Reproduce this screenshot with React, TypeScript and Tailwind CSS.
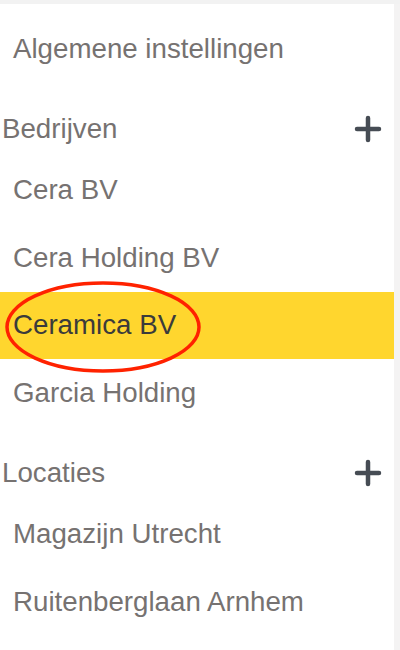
import React from 'react'

const font = { fontFamily: '"Liberation Sans", Arial, Helvetica, sans-serif' }

function Plus() {
  return (
    <svg className="w-[28px] h-[28px]" viewBox="0 0 28 28" fill="none">
      <path d="M14 3v22M3 14h22" stroke="#464c54" strokeWidth={4.5} strokeLinecap="round" />
    </svg>
  )
}

function Item({ label, active = false }: { label: string; active?: boolean }) {
  return (
    <div
      className={`relative h-[67.5px] flex items-center pl-[13px] text-[27.7px] ${
        active ? 'bg-[#ffd62e] text-[#3b3b3b]' : 'text-[#767271]'
      }`}
    >
      {label}
      {active && (
        <svg
          className="absolute left-[3px] top-[-12px] w-[200px] h-[94px] pointer-events-none"
          viewBox="0 0 200 94"
          fill="none"
        >
          <ellipse cx="100" cy="47" rx="96" ry="44" stroke="#ff2200" strokeWidth={3.5} />
        </svg>
      )}
    </div>
  )
}

function Header({ label }: { label: string }) {
  return (
    <div className="h-[74px] flex items-end pb-[7px]">
      <div className="flex-1 flex items-center justify-between pl-[2px] pr-[12px] text-[27.7px] text-[#767271]">
        <span>{label}</span>
        <Plus />
      </div>
    </div>
  )
}

export default function App() {
  const bedrijven = ['Cera BV', 'Cera Holding BV', 'Ceramica BV', 'Garcia Holding']
  const locaties = ['Magazijn Utrecht', 'Ruitenberglaan Arnhem']

  return (
    <div className="w-[400px] h-[650px] bg-[#f4f3f3] flex flex-col overflow-hidden" style={font}>
      <div className="h-[4px] bg-[#f2f2f2]" />
      <div className="flex-1 w-[394px] bg-white pt-[11px]">
        <Item label="Algemene instellingen" />

        <Header label="Bedrijven" />
        {bedrijven.map(b => (
          <Item key={b} label={b} active={b === 'Ceramica BV'} />
        ))}

        <Header label="Locaties" />
        {locaties.map(l => (
          <Item key={l} label={l} />
        ))}
      </div>
    </div>
  )
}
